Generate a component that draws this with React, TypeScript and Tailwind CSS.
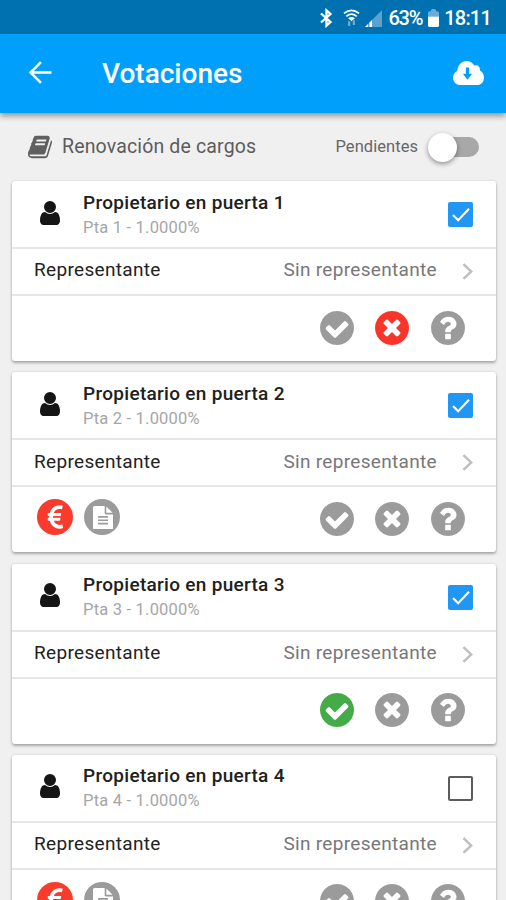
import React from 'react';

type Vote = 'yes' | 'no' | null;

interface Owner {
  id: number;
  name: string;
  detail: string;
  present: boolean;
  vote: Vote;
  debtor: boolean;
}

const owners: Owner[] = [
  { id: 1, name: 'Propietario en puerta 1', detail: 'Pta 1 - 1.0000%', present: true, vote: 'no', debtor: false },
  { id: 2, name: 'Propietario en puerta 2', detail: 'Pta 2 - 1.0000%', present: true, vote: null, debtor: true },
  { id: 3, name: 'Propietario en puerta 3', detail: 'Pta 3 - 1.0000%', present: true, vote: 'yes', debtor: false },
  { id: 4, name: 'Propietario en puerta 4', detail: 'Pta 4 - 1.0000%', present: false, vote: null, debtor: true },
];

const IconBluetooth = () => <svg className="h-[20px] w-[13px]" viewBox="0 0 13 20" fill="none" stroke="#fff" strokeWidth={2.3}><path d="M1 5.500l9.500 8.500-4 3.600V2.400l4 3.600L1 14.500" /></svg>;
const IconWifi = () => (
  <svg className="h-[20px] w-[17px]" viewBox="0 0 18 20" fill="none" stroke="#fff">
    <path strokeWidth={1.8} d="M1 5.200c5-4.200 11-4.200 16 0M3.500 8.200c3.400-2.800 7.600-2.800 11 0M6 11c1.900-1.500 4.100-1.500 6 0" />
    <path fill="#fff" stroke="none" d="M6 10.200h6L9 13.500z" />
    <path stroke="#69add5" strokeWidth={2.4} d="M6.500 13.500v5M11.500 12.500v5" />
  </svg>
);
const IconSignal = () => <svg className="h-[17px] w-[17px]" viewBox="0 0 17 17"><path fill="#5ba3cf" d="M0 17L17 0v17z" /><path fill="#fff" d="M0 17l3-3v3zM4.500 17v-4.500l2.500-2.500V17z" /></svg>;
const IconBattery = () => <svg className="h-[18px] w-[11px]" viewBox="0 0 12 19" preserveAspectRatio="none"><path fill="#69add5" d="M0 8V4l1-1.500h2L4 0h4l1 2.500h2L12 4v4z" /><path fill="#fff" d="M0 8h12v9.500q0 1.500-1.500 1.500h-9Q0 19 0 17.500z" /></svg>;
const IconBack = () => <svg className="h-[23px] w-[24px]" viewBox="0 0 24 24" fill="none" stroke="#fff" strokeWidth={2.7}><path d="M24 12H2.500M13 1.200L2.200 12 13 22.800" /></svg>;
const IconCloud = () => (
  <svg className="h-[24px] w-[31px]" viewBox="0 0 31 24">
    <path fill="#fff" d="M7 24C3 24 0 20.800 0 16.800c0-3.100 1.800-5.800 4.300-6.800C4.500 4.300 8.600 0 13.500 0c3.400 0 6.200 1.800 7.800 4.600 3.200-1 5.900 1.200 5.700 4.800 2.400 1.200 4 3.900 4 7 0 4.300-2.900 7.600-6.700 7.600z" />
    <path fill="#009ffb" d="M12.900 6.500h3.200v6.300h3L14.500 18.800 9.900 12.800h3z" />
  </svg>
);
const IconBook = () => <svg className="h-[26px] w-[26px]" viewBox="0 0 1792 1792" fill="#606060"><path d="M1703 478q40 57 18 129l-275 906q-19 64-76.5 107.5t-122.5 43.5h-923q-77 0-148.5-53.5t-99.5-131.5q-24-67-2-127 0-4 3-27t4-37q1-8-3-21.5t-3-19.5q2-11 8-21t16.5-23.5 16.5-23.5q23-38 45-91.5t30-91.5q3-10 .5-30t-.5-28q3-11 17-28t17-23q21-36 42-92t25-90q1-9-2.5-32t.5-28q4-13 22-30.5t22-22.5q19-26 42.5-84.5t27.5-96.5q1-8-3-25.5t-2-26.5q2-8 9-18t18-23 17-21q8-12 16.5-30.5t15-35 16-36 19.5-32 26.5-23.5 36-11.5 47.5 5.5l-1 3q38-9 51-9h761q74 0 114 56t18 130l-274 906q-36 119-71.5 153.5t-128.5 34.5h-869q-27 0-38 15-11 16-1 43 24 70 144 70h923q29 0 56-15.5t35-41.5l300-987q7-22 5-57 38 15 59 43zm-1064 2q-4 13 2 22.5t20 9.5h608q13 0 25.5-9.5t16.5-22.5l21-64q4-13-2-22.5t-20-9.5h-608q-13 0-25.5 9.5t-16.5 22.5zm-83 256q-4 13 2 22.5t20 9.5h608q13 0 25.5-9.5t16.5-22.5l21-64q4-13-2-22.5t-20-9.5h-608q-13 0-25.5 9.5t-16.5 22.5z" /></svg>;
const IconUser = () => <svg className="h-[24px] w-[20px]" viewBox="256 128 1280 1536" fill="#151515"><path d="M1536 1399q0 109-62.5 187t-150.5 78h-854q-88 0-150.5-78t-62.5-187q0-85 8.5-160.5t31.5-152 58.5-131 94-89 134.5-34.5q131 128 313 128t313-128q76 0 134.5 34.5t94 89 58.5 131 31.5 152 8.5 160.5zm-256-887q0 159-112.5 271.5t-271.5 112.5-271.5-112.5-112.5-271.5 112.5-271.5 271.5-112.5 271.5 112.5 112.5 271.5z" /></svg>;
const IconEuro = () => <svg className="h-[30px] w-[27px]" viewBox="0 0 1792 1792" preserveAspectRatio="none" fill="#fff"><path d="M1360 1307l35 159q3 12-3 22.5t-17 14.500l-5 1q-4 2-10.5 3.500t-16 4.500-21.5 5.500-25.5 5-30 5-33.5 4.500-36.500 3-38.500 1q-234 0-409-130.500t-238-351.500h-95q-13 0-22.500-9.500t-9.500-22.500v-113q0-13 9.500-22.500t22.500-9.500h66q-2-57 1-105h-67q-14 0-23-9t-9-23v-114q0-14 9-23t23-9h98q67-210 243.500-338t400.500-128q102 0 194 23 11 3 20 15 6 11 3 24l-43 159q-3 13-14 19.500t-24 2.500l-4-1q-4-1-11.500-2.500l-17.500-3.500-22.500-3.500-26-3-29-2.500-29.500-1q-126 0-226 64t-150 176h468q16 0 25 12 10 12 7 26l-24 114q-5 26-32 26h-488q-3 37 0 105h459q15 0 25 12 9 12 6 27l-24 112q-2 11-11 18.500t-20 7.500h-387q48 117 149.500 185.500t228.500 68.500q18 0 36-1.500t33.500-3.500 29.500-4.500 24.500-5 18.500-4.500l12-3 5-2q13-5 26 2 12 7 15 21z" /></svg>;
const IconFile = () => <svg className="h-[23.5px] w-[20px]" viewBox="128 0 1536 1792" fill="#fff"><path d="M1596 476q14 14 28 36h-472v-472q22 14 36 28zm-476 164h544v1056q0 40-28 68t-68 28h-1344q-40 0-68-28t-28-68v-1600q0-40 28-68t68-28h800v544q0 40 28 68t68 28zm160 736v-64q0-14-9-23t-23-9h-704q-14 0-23 9t-9 23v64q0 14 9 23t23 9h704q14 0 23-9t9-23zm0-256v-64q0-14-9-23t-23-9h-704q-14 0-23 9t-9 23v64q0 14 9 23t23 9h704q14 0 23-9t9-23zm0-256v-64q0-14-9-23t-23-9h-704q-14 0-23 9t-9 23v64q0 14 9 23t23 9h704q14 0 23-9t9-23z" /></svg>;
const IconYes = () => <path d="M1412 734q0-28-18-46l-91-90q-19-19-45-19t-45 19l-408 407-226-226q-19-19-45-19t-45 19l-91 90q-18 18-18 46 0 27 18 45l362 362q19 19 45 19 27 0 46-19l543-543q18-18 18-45zm252 162q0 209-103 385.5t-279.5 279.5-385.5 103-385.5-103-279.5-279.5-103-385.5 103-385.5 279.5-279.5 385.5-103 385.5 103 279.5 279.5 103 385.5z" />;
const IconNo = () => <path d="M1277 1122q0-26-19-45l-181-181 181-181q19-19 19-45 0-27-19-46l-90-90q-19-18-46-18-26 0-45 18l-181 181-181-181q-19-18-45-18-27 0-46 18l-90 90q-19 19-19 46 0 26 19 45l181 181-181 181q-19 19-19 45 0 27 19 46l90 90q19 18 46 18 26 0 45-18l181-181 181 181q19 18 45 18 27 0 46-18l90-90q19-19 19-46zm387-226q0 209-103 385.5t-279.5 279.5-385.5 103-385.5-103-279.5-279.5-103-385.5 103-385.5 279.5-279.5 385.5-103 385.5 103 279.5 279.5 103 385.5z" />;
const IconAbstain = () => <path d="M1024 1376v-192q0-14-9-23t-23-9h-192q-14 0-23 9t-9 23v192q0 14 9 23t23 9h192q14 0 23-9t9-23zm256-672q0-88-55.5-163t-138.5-116-170-41q-243 0-371 213-15 24 8 42l132 100q7 6 19 6 16 0 25-12 53-68 86-92 34-24 86-24 48 0 85.5 26t37.5 59q0 38-20 61t-68 45q-63 28-115.5 86.5t-52.5 125.5v36q0 14 9 23t23 9h192q14 0 23-9t9-23q0-19 21.5-49.5t54.5-49.5q32-18 49-28.5t46-35 44.5-48 28-60.5 12.5-81zm384 192q0 209-103 385.5t-279.5 279.5-385.5 103-385.5-103-279.5-279.5-103-385.5 103-385.5 279.5-279.5 385.5-103 385.5 103 279.5 279.5 103 385.5z" />;

const VoteButton: React.FC<{ colour: string; label: string; children: React.ReactNode }> = ({ colour, label, children }) => (
  <button type="button" aria-label={label} className={colour}>
    <svg className="h-[34px] w-[34px]" viewBox="128 128 1536 1536" fill="currentColor">{children}</svg>
  </button>
);

const Checkbox: React.FC<{ checked: boolean }> = ({ checked }) =>
  checked ? (
    <span className="flex h-[25px] w-[25px] items-center justify-center rounded-[2px] bg-[#2196f3]">
      <svg className="h-[17px] w-[20px]" viewBox="0 0 20 18" fill="none" stroke="#fff" strokeWidth={2.3}><path d="M1.500 9.500l5.500 5.500L18.500 3" /></svg>
    </span>
  ) : (
    <span className="block h-[25px] w-[25px] rounded-[2px] border-2 border-[#5c5c5c]" />
  );

const OwnerCard: React.FC<{ owner: Owner }> = ({ owner }) => (
  <div className="h-[180px] rounded-[3px] bg-white shadow-[0_2px_3px_rgba(0,0,0,0.28),0_0_3px_rgba(0,0,0,0.12)]">
    <div className="flex h-[68px] items-center border-b-2 border-[#e6e6e6] pr-[23px] pl-[27.500px]">
      <div className="pb-[3px]"><IconUser /></div>
      <div className="ml-[23.500px] flex-1 pt-[2px]">
        <p className="text-[19px] leading-[24px] font-medium tracking-[0.300px] text-[#202020]">{owner.name}</p>
        <p className="text-[16.500px] leading-[25px] tracking-[0.200px] text-[#a6a6a6]">{owner.detail}</p>
      </div>
      <div className="pt-px"><Checkbox checked={owner.present} /></div>
    </div>
    <div className="flex h-[47px] items-center border-b-2 border-[#e6e6e6] pr-[23px] pb-[2px] pl-[22px] text-[19px] tracking-[0.320px]">
      <span className="flex-1 text-[#222]">Representante</span>
      <span className="text-[#777]">Sin representante</span>
      <svg className="mt-[2px] ml-[25px] h-[17px] w-[11px]" viewBox="0 0 11 18" fill="none" stroke="#bfbfbf" strokeWidth={2.6}><path d="M1.200 1.200L9.500 9l-8.300 7.800" /></svg>
    </div>
    <div className="flex h-[65px] items-center pr-[31.500px] pb-[2px] pl-[25px]">
      {owner.debtor && (
        <div className="flex gap-[11px] pb-[3px]">
          <span className="flex h-[36px] w-[36px] items-center justify-center rounded-full bg-[#f93b2d] pt-[2px]"><IconEuro /></span>
          <span className="flex h-[36px] w-[36px] items-center justify-center rounded-full bg-[#9b9b9b] pl-[2px]"><IconFile /></span>
        </div>
      )}
      <div className="ml-auto flex gap-[21.500px]">
        <VoteButton label="A favor" colour={owner.vote === 'yes' ? 'text-[#43ab48]' : 'text-[#9b9b9b]'}><IconYes /></VoteButton>
        <VoteButton label="En contra" colour={owner.vote === 'no' ? 'text-[#f9352a]' : 'text-[#9b9b9b]'}><IconNo /></VoteButton>
        <VoteButton label="Abstención" colour="text-[#9b9b9b]"><IconAbstain /></VoteButton>
      </div>
    </div>
  </div>
);

export default function App() {
  return (
    <div className="flex h-[900px] w-[506px] flex-col overflow-hidden bg-[#f0f0f0] font-['Roboto',sans-serif]">
      <div className="flex h-[34px] shrink-0 items-center bg-[#0071b0] pt-[2px] pr-[15px] pl-[320px] text-white">
        <IconBluetooth />
        <div className="ml-[10px]"><IconWifi /></div>
        <div className="ml-[5px]"><IconSignal /></div>
        <span className="ml-auto text-[20px] font-medium tracking-[-1.200px]">63%</span>
        <div className="ml-[6px]"><IconBattery /></div>
        <span className="ml-[5px] text-[20px] font-medium tracking-[-0.800px]">18:11</span>
      </div>
      <header className="z-10 flex h-[79px] shrink-0 items-center bg-[#009ffb] pr-[22px] pb-[2px] pl-[28px] shadow-[0_3px_6px_rgba(0,0,0,0.4)]">
        <IconBack />
        <h1 className="mt-[2px] ml-[50px] flex-1 text-[28px] font-medium text-white">Votaciones</h1>
        <IconCloud />
      </header>
      <div className="flex h-[68px] shrink-0 items-center pr-[27px] pl-[27px]">
        <IconBook />
        <span className="ml-[9px] flex-1 text-[19.500px] tracking-[0.150px] text-[#5c5c5c]">Renovación de cargos</span>
        <span className="pt-px text-[16.500px] tracking-[0.050px] text-[#666]">Pendientes</span>
        <div className="ml-[14px] flex h-[20px] w-[47px] items-center rounded-full bg-[#a8a8a8]">
          <span className="-ml-[4px] h-[29px] w-[29px] rounded-full bg-white shadow-[0_2px_5px_rgba(0,0,0,0.4)]" />
        </div>
      </div>
      <main className="flex flex-col gap-[11.330px] px-[12px] pr-[10px]">
        {owners.map(owner => <OwnerCard key={owner.id} owner={owner} />)}
      </main>
    </div>
  );
}
